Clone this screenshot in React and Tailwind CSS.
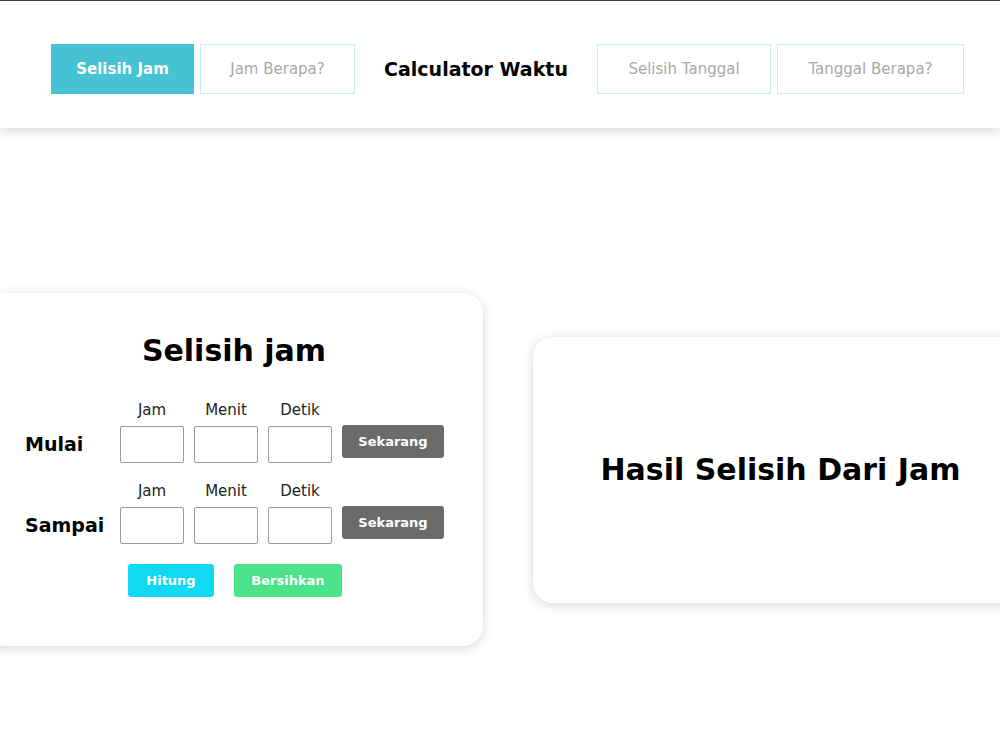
const TABS_LEFT = [
  { label: 'Selisih Jam', active: true, width: 'w-[143px]' },
  { label: 'Jam Berapa?', active: false, width: 'w-[155px]' },
];
const TABS_RIGHT = [
  { label: 'Selisih Tanggal', active: false, width: 'w-[174px]' },
  { label: 'Tanggal Berapa?', active: false, width: 'w-[187px]' },
];

function Tab({ label, active, width }) {
  return (
    <button
      type="button"
      className={`${width} h-[50px] text-[15px] ${
        active
          ? 'bg-[#45c2d3] font-bold text-white'
          : 'border border-[#c8eef2] bg-white text-[#a8a8a8]'
      }`}
    >
      {label}
    </button>
  );
}

function TimeRow({ label }) {
  return (
    <div className="flex flex-col">
      <div className="ml-[95px] flex gap-[10px] text-[15px] text-[#222]">
        {['Jam', 'Menit', 'Detik'].map((name) => (
          <span key={name} className="w-[64px] text-center leading-[15px]">
            {name}
          </span>
        ))}
      </div>
      <div className="mt-[7px] flex items-center">
        <span className="w-[95px] text-[19px] font-bold text-black">{label}</span>
        <div className="flex gap-[10px]">
          <input className="h-[37px] w-[64px] rounded-[2px] border border-[#9a9a9a] bg-white" />
          <input className="h-[37px] w-[64px] rounded-[2px] border border-[#9a9a9a] bg-white" />
          <input className="h-[37px] w-[64px] rounded-[2px] border border-[#9a9a9a] bg-white" />
        </div>
        <button
          type="button"
          className="mb-[6px] ml-[10px] h-[33px] w-[102px] rounded-[3px] bg-[#6b6b6b] text-[13px] font-bold text-white"
        >
          Sekarang
        </button>
      </div>
    </div>
  );
}

export default function App() {
  return (
    <div className="min-h-[750px] overflow-hidden border-t border-[#3a3a3a] bg-white font-['DejaVu_Sans',sans-serif]">
      <header className="flex h-[127px] items-center gap-[6px] bg-white pl-[51px] pt-[9px] shadow-[0_4px_10px_rgba(0,0,0,0.14)]">
        {TABS_LEFT.map((tab) => (
          <Tab key={tab.label} {...tab} />
        ))}
        <h1 className="w-[230px] text-center text-[19px] font-bold text-black">Calculator Waktu</h1>
        {TABS_RIGHT.map((tab) => (
          <Tab key={tab.label} {...tab} />
        ))}
      </header>

      <main className="flex items-center gap-[50px] pt-[165px]">
        <section className="ml-[-15px] flex h-[353px] w-[498px] shrink-0 flex-col rounded-[20px] bg-white pl-[40px] pt-[40px] shadow-[0_2px_12px_rgba(0,0,0,0.16)]">
          <h2 className="ml-[-40px] text-center text-[30px] font-bold leading-[36px] text-black">Selisih jam</h2>
          <div className="mt-[34px] flex flex-col gap-[20px]">
            <TimeRow label="Mulai" />
            <TimeRow label="Sampai" />
          </div>
          <div className="mt-[19px] flex gap-[20px] pl-[103px]">
            <button
              type="button"
              className="h-[33px] w-[86px] rounded-[3px] bg-[#10d9f1] text-[13px] font-bold text-white"
            >
              Hitung
            </button>
            <button
              type="button"
              className="h-[33px] w-[108px] rounded-[3px] bg-[#4ae38a] text-[13px] font-bold text-white"
            >
              Bersihkan
            </button>
          </div>
        </section>

        <section className="flex h-[266px] w-[495px] shrink-0 items-center justify-center rounded-[20px] bg-white shadow-[0_2px_12px_rgba(0,0,0,0.16)]">
          <h2 className="text-[30px] font-bold text-black">Hasil Selisih Dari Jam</h2>
        </section>
      </main>
    </div>
  );
}
